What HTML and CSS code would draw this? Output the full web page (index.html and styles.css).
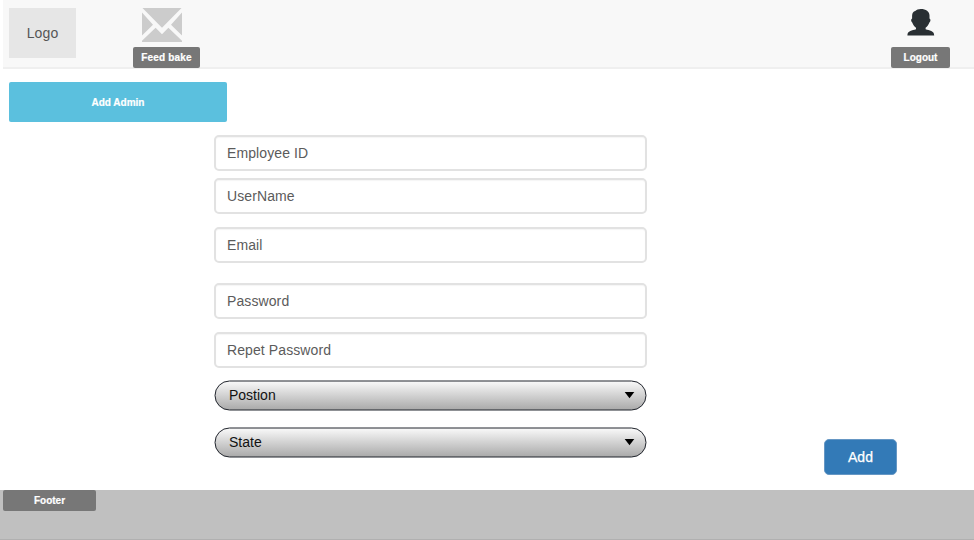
FILE: index.html
```html
<!DOCTYPE html>
<html lang="en">
<head>
<meta charset="utf-8">
<title>Add Admin</title>
<link rel="stylesheet" href="styles.css">
</head>
<body>
<header class="topbar">
  <div class="logo">Logo</div>
  <div class="action feedback">
    <svg class="mail" width="40" height="34" viewBox="0 0 40 34"><path d="M.5 0H39.5L20 19.8ZM0 4.5L11 16.8L0 27.5ZM40 4.5V27.5L29 16.8ZM0 34V32.8L13.6 19.7L20 26.3L26.4 19.7L40 32.8V34Z"/></svg>
    <span class="tag">Feed bake</span>
  </div>
  <div class="action account">
    <svg class="user" width="28" height="27" viewBox="0 0 28 27"><path d="M13.8 0C19 0 22.4 2.4 22.5 6.5V9.4C23.9 9.8 23.7 12.5 22.4 13.4C21.6 15.6 20.3 17.3 18.6 18.8V20.3C22.3 21.4 27.2 21.8 27.2 26.4H.4C.4 21.8 5.3 21.4 9 20.3V18.8C7.3 17.3 6 15.6 5.2 13.4C3.9 12.5 3.7 9.8 5.1 9.4V6.5C5.2 4 6.4 2.4 8.2 2C9.4 .7 11.4 0 13.8 0Z"/></svg>
    <span class="tag">Logout</span>
  </div>
</header>
<main class="content">
  <div class="banner">Add Admin</div>
  <form class="form">
    <div class="field">Employee ID</div>
    <div class="field user-name">UserName</div>
    <div class="field email">Email</div>
    <div class="field password">Password</div>
    <div class="field repeat">Repet Password</div>
    <div class="select position">
      <svg class="pill" width="433" height="31"><defs><linearGradient id="shade" x1="0" y1="0" x2="0" y2="1"><stop offset="0" stop-color="#fafafa"/><stop offset="1" stop-color="#a9a9a9"/></linearGradient></defs><rect x="1" y="1" width="431" height="29" rx="14.5" fill="url(#shade)" stroke="#20242c"/><path d="M410.7 12H420.3L415.5 18.3Z"/></svg>
      <span class="value">Postion</span>
    </div>
    <div class="select state">
      <svg class="pill" width="433" height="31"><rect x="1" y="1" width="431" height="29" rx="14.5" fill="url(#shade)" stroke="#20242c"/><path d="M410.7 12H420.3L415.5 18.3Z"/></svg>
      <span class="value">State</span>
    </div>
  </form>
  <button class="add">Add</button>
</main>
<footer class="footer"><span class="tag footer-tag">Footer</span></footer>
</body>
</html>
```
FILE: styles.css
```css
* { box-sizing: border-box; }
body {
  margin: 0;
  height: 540px;
  display: flex;
  flex-direction: column;
  overflow: hidden;
  background: #fff;
  font: 14px/20px "Liberation Sans", Arial, sans-serif;
}
svg { display: block; }
.topbar {
  height: 69px;
  margin-left: 3px;
  padding: 8px 24px 0 6px;
  display: flex;
  align-items: flex-start;
  background: #f8f8f8;
  border-bottom: 2px solid #efefef;
}
.logo {
  width: 67px;
  height: 50px;
  background: #e6e6e6;
  color: #555;
  line-height: 50px;
  text-align: center;
  letter-spacing: .1px;
}
.action { display: flex; flex-direction: column; height: 60px; justify-content: space-between; }
.feedback { width: 67px; margin-left: 57px; }
.account { width: 59px; margin-left: auto; }
.mail { margin-left: 9px; fill: #ccc; }
.user { margin: 1px 0 0 16px; fill: #292f33; }
.tag {
  display: block;
  height: 21px;
  border-radius: 2px;
  background: #777;
  color: #fff;
  font-size: 10px;
  font-weight: bold;
  line-height: 21px;
  letter-spacing: .2px;
  -webkit-text-stroke: .2px #fff;
  text-align: center;
}
.account .tag, .footer-tag { letter-spacing: 0; }
.content {
  height: 421px;
  padding: 13px 77px 15px 9px;
  display: grid;
  grid-template-columns: 205px 433px 1fr;
  grid-template-rows: 40px 1fr;
  row-gap: 13px;
}
.banner {
  grid-column: 1 / 3;
  width: 218px;
  border-radius: 2px;
  background: #5bc0de;
  color: #fff;
  font-size: 10px;
  font-weight: bold;
  line-height: 41px;
  -webkit-text-stroke: .2px #fff;
  text-align: center;
}
.form { grid-column: 2; grid-row: 2; }
.field {
  height: 36px;
  padding-left: 11px;
  border: 2px solid #e2e2e2;
  border-radius: 5px;
  box-shadow: inset 0 1px 1px #f6f6f6;
  color: #5b5b5b;
  line-height: 32px;
  letter-spacing: .1px;
}
.user-name { margin-top: 7px; }
.email { margin-top: 13px; }
.password { margin-top: 20px; }
.repeat { margin-top: 13px; }
.select {
  position: relative;
  height: 31px;
  padding-left: 15px;
  color: #111;
  line-height: 30px;
}
.position { margin-top: 12px; }
.state { margin-top: 16px; }
.pill { position: absolute; inset: 0; }
.value { position: relative; }
.add {
  grid-column: 3;
  grid-row: 2;
  justify-self: end;
  align-self: end;
  width: 73px;
  height: 36px;
  padding: 0;
  border: 1px solid #6697c4;
  border-radius: 5px;
  background: #337ab7;
  color: #fff;
  font: inherit;
  -webkit-text-stroke: .25px #fff;
}
.footer { height: 50px; padding-left: 3px; background: #c0c0c0; border-bottom: 1px solid #b0b0b0; }
.footer-tag { width: 93px; }
```
